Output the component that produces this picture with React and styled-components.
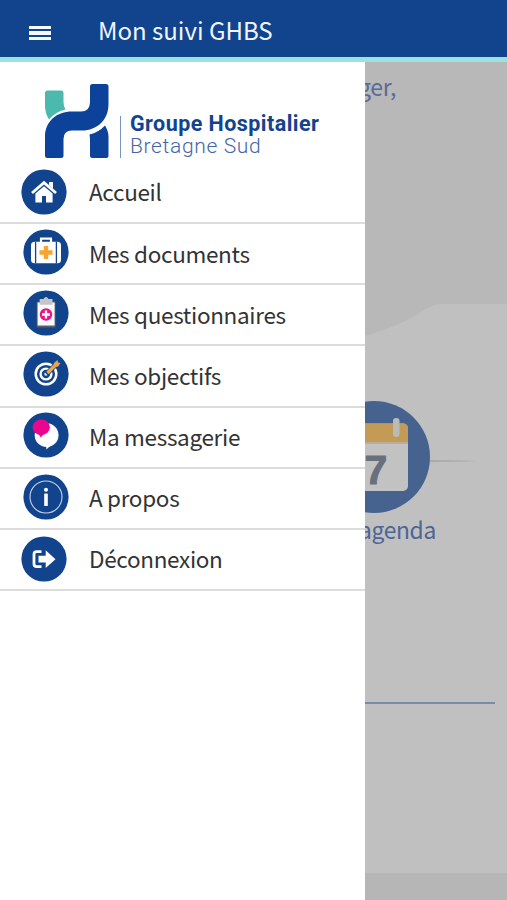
import React from 'react'
import styled, { createGlobalStyle } from 'styled-components'

const GlobalStyle = createGlobalStyle`
  * {
    box-sizing: border-box;
  }

  body {
    margin: 0;
    font-family: 'Noto Sans CJK SC', 'Open Sans', sans-serif;
  }
`

const Page = styled.div`
  display: flex;
  flex-direction: column;
  height: 900px;
  width: 507px;
  overflow: hidden;
`

const Header = styled.header`
  display: flex;
  align-items: center;
  flex: none;
  height: 62px;
  padding-left: 29px;
  background-color: #12438d;
  border-bottom: 5px solid #9ce1dc;
`

const Burger = styled.div`
  display: flex;
  flex-direction: column;
  gap: 2px;
  width: 22px;
  margin: 9px 47px 0 0;
`

const BurgerLine = styled.span`
  height: 3.5px;
  background-color: #f4f8ff;
`

const Title = styled.h1`
  margin: 2px 0 0;
  font-size: 24px;
  font-weight: 400;
  line-height: 30px;
  color: #f0f6ff;
  white-space: nowrap;
`

const Body = styled.div`
  display: flex;
  flex: 1;
`

const Drawer = styled.aside`
  flex: none;
  width: 365px;
  background-color: #fff;
`

const Brand = styled.div`
  display: flex;
  height: 101px;
  padding: 21px 0 0 44px;
`

const BrandText = styled.div`
  height: 42px;
  margin: 33px 0 0 11px;
  padding-left: 9px;
  border-left: 1.5px solid #7b93c4;
  font-family: Roboto, sans-serif;
  white-space: nowrap;
`

const BrandName = styled.div`
  margin-top: -4px;
  font-size: 21.5px;
  font-weight: 700;
  line-height: 23px;
  letter-spacing: 0.45px;
  color: #12438f;
`

const BrandRegion = styled.div`
  font-size: 21px;
  font-weight: 300;
  line-height: 23px;
  letter-spacing: 0.65px;
  color: #4365a8;
`

const Menu = styled.nav`
  display: flex;
  flex-direction: column;
`

const MenuItem = styled.a`
  display: flex;
  height: 61.15px;
  padding-left: ${props => (props.$outer ? '20.5px' : '22.5px')};
  border-bottom: 2px solid #dcdcdc;
`

const MenuLabel = styled.span`
  margin: 12.4px 0 0 ${props => (props.$outer ? '22.5px' : '20.5px')};
  font-size: 22.5px;
  line-height: 32px;
  letter-spacing: -0.32px;
  color: #333;
  white-space: nowrap;
`

const IconSvg = styled.svg`
  flex: none;
  width: 46px;
  height: 46px;
  margin-top: ${props => props.$top}px;
`

const Home = styled.main`
  display: flex;
  flex-direction: column;
  flex: 1;
  min-width: 0;
  overflow: hidden;
  background-color: #c0c0c0;
`

const Hero = styled.section`
  display: flex;
  flex-direction: column;
  justify-content: space-between;
  height: 275px;
  background-color: #b8b8b8;
`

const Greeting = styled.p`
  width: 31px;
  margin: 8px 0 0;
  display: flex;
  justify-content: flex-end;
  font-size: 23px;
  line-height: 32px;
  letter-spacing: -0.3px;
  color: #5a6b96;
`

const Wave = styled.svg`
  display: block;
  width: 142px;
  height: 34px;
`

const Agenda = styled.section`
  display: flex;
  flex-direction: column;
  height: 365px;
  padding-top: 64px;
`

const AgendaRow = styled.div`
  display: flex;
  align-items: center;
`

const AgendaIcon = styled.svg`
  flex: none;
  width: 112px;
  height: 112px;
  margin-left: -47px;
`

const Connector = styled.div`
  width: 46px;
  height: 1.5px;
  margin-top: 8px;
  background: linear-gradient(to right, #aaa8ab, #b5b1b2 70%, #bfbfbf);
`

const AgendaLabel = styled.div`
  display: flex;
  justify-content: flex-end;
  width: 71px;
  margin-top: 1px;
  font-size: 22.8px;
  line-height: 32px;
  letter-spacing: -0.3px;
  color: #4c6596;
`

const Divider = styled.hr`
  width: 130px;
  height: 2px;
  margin: 0;
  border: 0;
  background-color: #7a8ba6;
`

const Footer = styled.footer`
  height: 27px;
  margin-top: auto;
  background-color: #b6b6b6;
`

const BLUE = '#12438d'

function Icon({ top = 5, children }) {
  return (
    <IconSvg $top={top} viewBox="-23 -23 46 46">
      <circle r="22.6" fill={BLUE} />
      {children}
    </IconSvg>
  )
}

const HomeIcon = () => (
  <Icon top={6.4}>
    <path d="M5 -10H9V-3L5 -7Z" fill="#fff" />
    <path d="M-12 1L0 -9.3L12 1" fill="none" stroke="#fff" strokeWidth="2.8" />
    <path d="M-8.6 1.5L0 -5.8L8.6 1.5V10.6H2V4H-2V10.6H-8.6Z" fill="#fff" />
  </Icon>
)

const CaseIcon = () => (
  <Icon>
    <path d="M-5 -10V-13.3H5V-10" fill="none" stroke="#fff" strokeWidth="2.2" />
    <rect x="-15" y="-10.3" width="30" height="21.6" rx="3.5" fill="#fff" />
    <path d="M-10.4 -10.3V11.3M10.4 -10.3V11.3" stroke={BLUE} strokeWidth="1.3" />
    <path d="M0 -6V7M-6.5 0.5H6.5" stroke="#f6a531" strokeWidth="4.4" />
  </Icon>
)

const ClipboardIcon = () => (
  <Icon>
    <rect x="-9.3" y="-11.5" width="18.8" height="26" rx="1" fill="#56606f" />
    <rect x="-8.4" y="-10.5" width="17" height="23" fill="#fafafa" />
    <path d="M-6.3 -8.3V-14H-2.5Q0 -17.8 2.5 -14H6.5V-8.3Z" fill="#c4c6c8" />
    <circle cy="1.5" r="6.2" fill="#e9138a" />
    <path d="M0 -2.5V5.5M-4 1.5H4" stroke="#fff" strokeWidth="2.3" />
  </Icon>
)

const TargetIcon = () => (
  <Icon>
    <circle cy="0" r="10.3" fill="none" stroke="#fff" strokeWidth="2.5" />
    <circle cy="0" r="5.4" fill="none" stroke="#fff" strokeWidth="2.4" />
    <circle cy="0" r="1.8" fill="#dce5f1" />
    <path d="M0.5 0L9 -8.5" stroke={BLUE} strokeWidth="5" />
    <path d="M1.5 -1L8.5 -8" stroke="#eda94b" strokeWidth="3.4" />
    <path d="M6.5 -6L8 -11L11.5 -14L12 -11.5L14.5 -11L12 -7.5Z" fill="#e9a44a" />
  </Icon>
)

const ChatIcon = () => (
  <Icon top={4.2}>
    <circle cx="0.6" cy="0.2" r="11.9" fill="#fff" />
    <path d="M0.3 9V14.5L6.5 9Z" fill="#fff" />
    <ellipse cx="-4.8" cy="-7.8" rx="8.7" ry="7.8" fill="#ec058e" />
    <path d="M-8 -2L-5.2 2.6L-1.5 -2Z" fill="#ec058e" />
  </Icon>
)

const InfoIcon = () => (
  <Icon top={5}>
    <circle r="16" fill="none" stroke="#c7d6ec" strokeWidth="1.1" />
    <circle cx="0" cy="-7.3" r="2" fill="#fff" />
    <rect x="-1.8" y="-3.6" width="3.6" height="12.6" rx="0.6" fill="#fff" />
  </Icon>
)

const LogoutIcon = () => (
  <Icon top={5.8}>
    <path d="M-2.5 -7.4H-7.3Q-10 -7.4 -10 -4.7V4.9Q-10 7.6 -7.3 7.6H-2.5" fill="none" stroke="#fff" strokeWidth="2.8" />
    <path d="M-5.5 -3.2H1.7V-8.7L11.5 0.2L1.7 9V3.6H-5.5Z" fill="#fff" />
  </Icon>
)

const Logo = () => (
  <svg width="65" height="76" viewBox="0 0 65 76">
    <path d="M1 10Q1 7.5 3.5 7.5H17Q19.5 7.5 19.5 10V19Q19.5 24 21.5 26.5Q11 29 5 36.5Q1 30 1 23Z" fill="#4cb9ae" />
    <path
      d="M46 3.5Q46 1 48.5 1H62Q64.5 1 64.5 3.5V21C64.5 37 53 47.5 38 47.5H28Q19.5 47.5 19.5 56V72.5Q19.5 75 17 75H3.5Q1 75 1 72.5V54C1 38 13 28.5 28 28.5H37Q46 28.5 46 19Z"
      fill="#0d429b"
    />
    <path d="M45.5 51.5Q54.5 49.5 61 42.5Q64.5 48 64.5 54V72.5Q64.5 75 62 75H48.5Q46 75 46 72.5V57Q46 54 45.5 51.5Z" fill="#0d429b" />
  </svg>
)

const CalendarIcon = () => (
  <AgendaIcon viewBox="0 0 112 112">
    <circle cx="56" cy="56" r="56" fill="#46628f" />
    <rect x="22" y="22.5" width="68" height="67.5" rx="5" fill="#c2c2c3" />
    <path d="M22 41.5V27.5Q22 22.5 27 22.5H85Q90 22.5 90 27.5V41.5Z" fill="#c39b56" />
    <path d="M22 42H90" stroke="#b4a999" strokeWidth="1.5" />
    <rect x="75" y="17" width="6.5" height="19" rx="3" fill="#b9bcb4" />
    <text
      x="46.5"
      y="82.5"
      fontFamily="Liberation Sans, sans-serif"
      fontSize="41"
      fontWeight="700"
      fill="#686f7d"
      stroke="#686f7d"
      strokeWidth="1"
      strokeLinejoin="round"
    >
      7
    </text>
  </AgendaIcon>
)

const items = [
  { label: 'Accueil', icon: HomeIcon, outer: true },
  { label: 'Mes documents', icon: CaseIcon },
  { label: 'Mes questionnaires', icon: ClipboardIcon },
  { label: 'Mes objectifs', icon: TargetIcon },
  { label: 'Ma messagerie', icon: ChatIcon },
  { label: 'A propos', icon: InfoIcon },
  { label: 'Déconnexion', icon: LogoutIcon, outer: true },
]

export default function App() {
  return (
    <Page>
      <GlobalStyle />
      <Header>
        <Burger>
          <BurgerLine />
          <BurgerLine />
          <BurgerLine />
        </Burger>
        <Title>Mon suivi GHBS</Title>
      </Header>
      <Body>
        <Drawer>
          <Brand>
            <Logo />
            <BrandText>
              <BrandName>Groupe Hospitalier</BrandName>
              <BrandRegion>Bretagne Sud</BrandRegion>
            </BrandText>
          </Brand>
          <Menu>
            {items.map(({ label, icon: ItemIcon, outer }) => (
              <MenuItem key={label} $outer={outer}>
                <ItemIcon />
                <MenuLabel $outer={outer}>{label}</MenuLabel>
              </MenuItem>
            ))}
          </Menu>
        </Drawer>
        <Home>
          <Hero>
            <Greeting>ger,</Greeting>
            <Wave viewBox="0 0 142 34">
              <path d="M0 34V33C32 24 48 14 65 4Q70 1 76 1H142V34Z" fill="#c0c0c0" />
            </Wave>
          </Hero>
          <Agenda>
            <AgendaRow>
              <CalendarIcon />
              <Connector />
            </AgendaRow>
            <AgendaLabel>agenda</AgendaLabel>
          </Agenda>
          <Divider />
          <Footer />
        </Home>
      </Body>
    </Page>
  )
}
